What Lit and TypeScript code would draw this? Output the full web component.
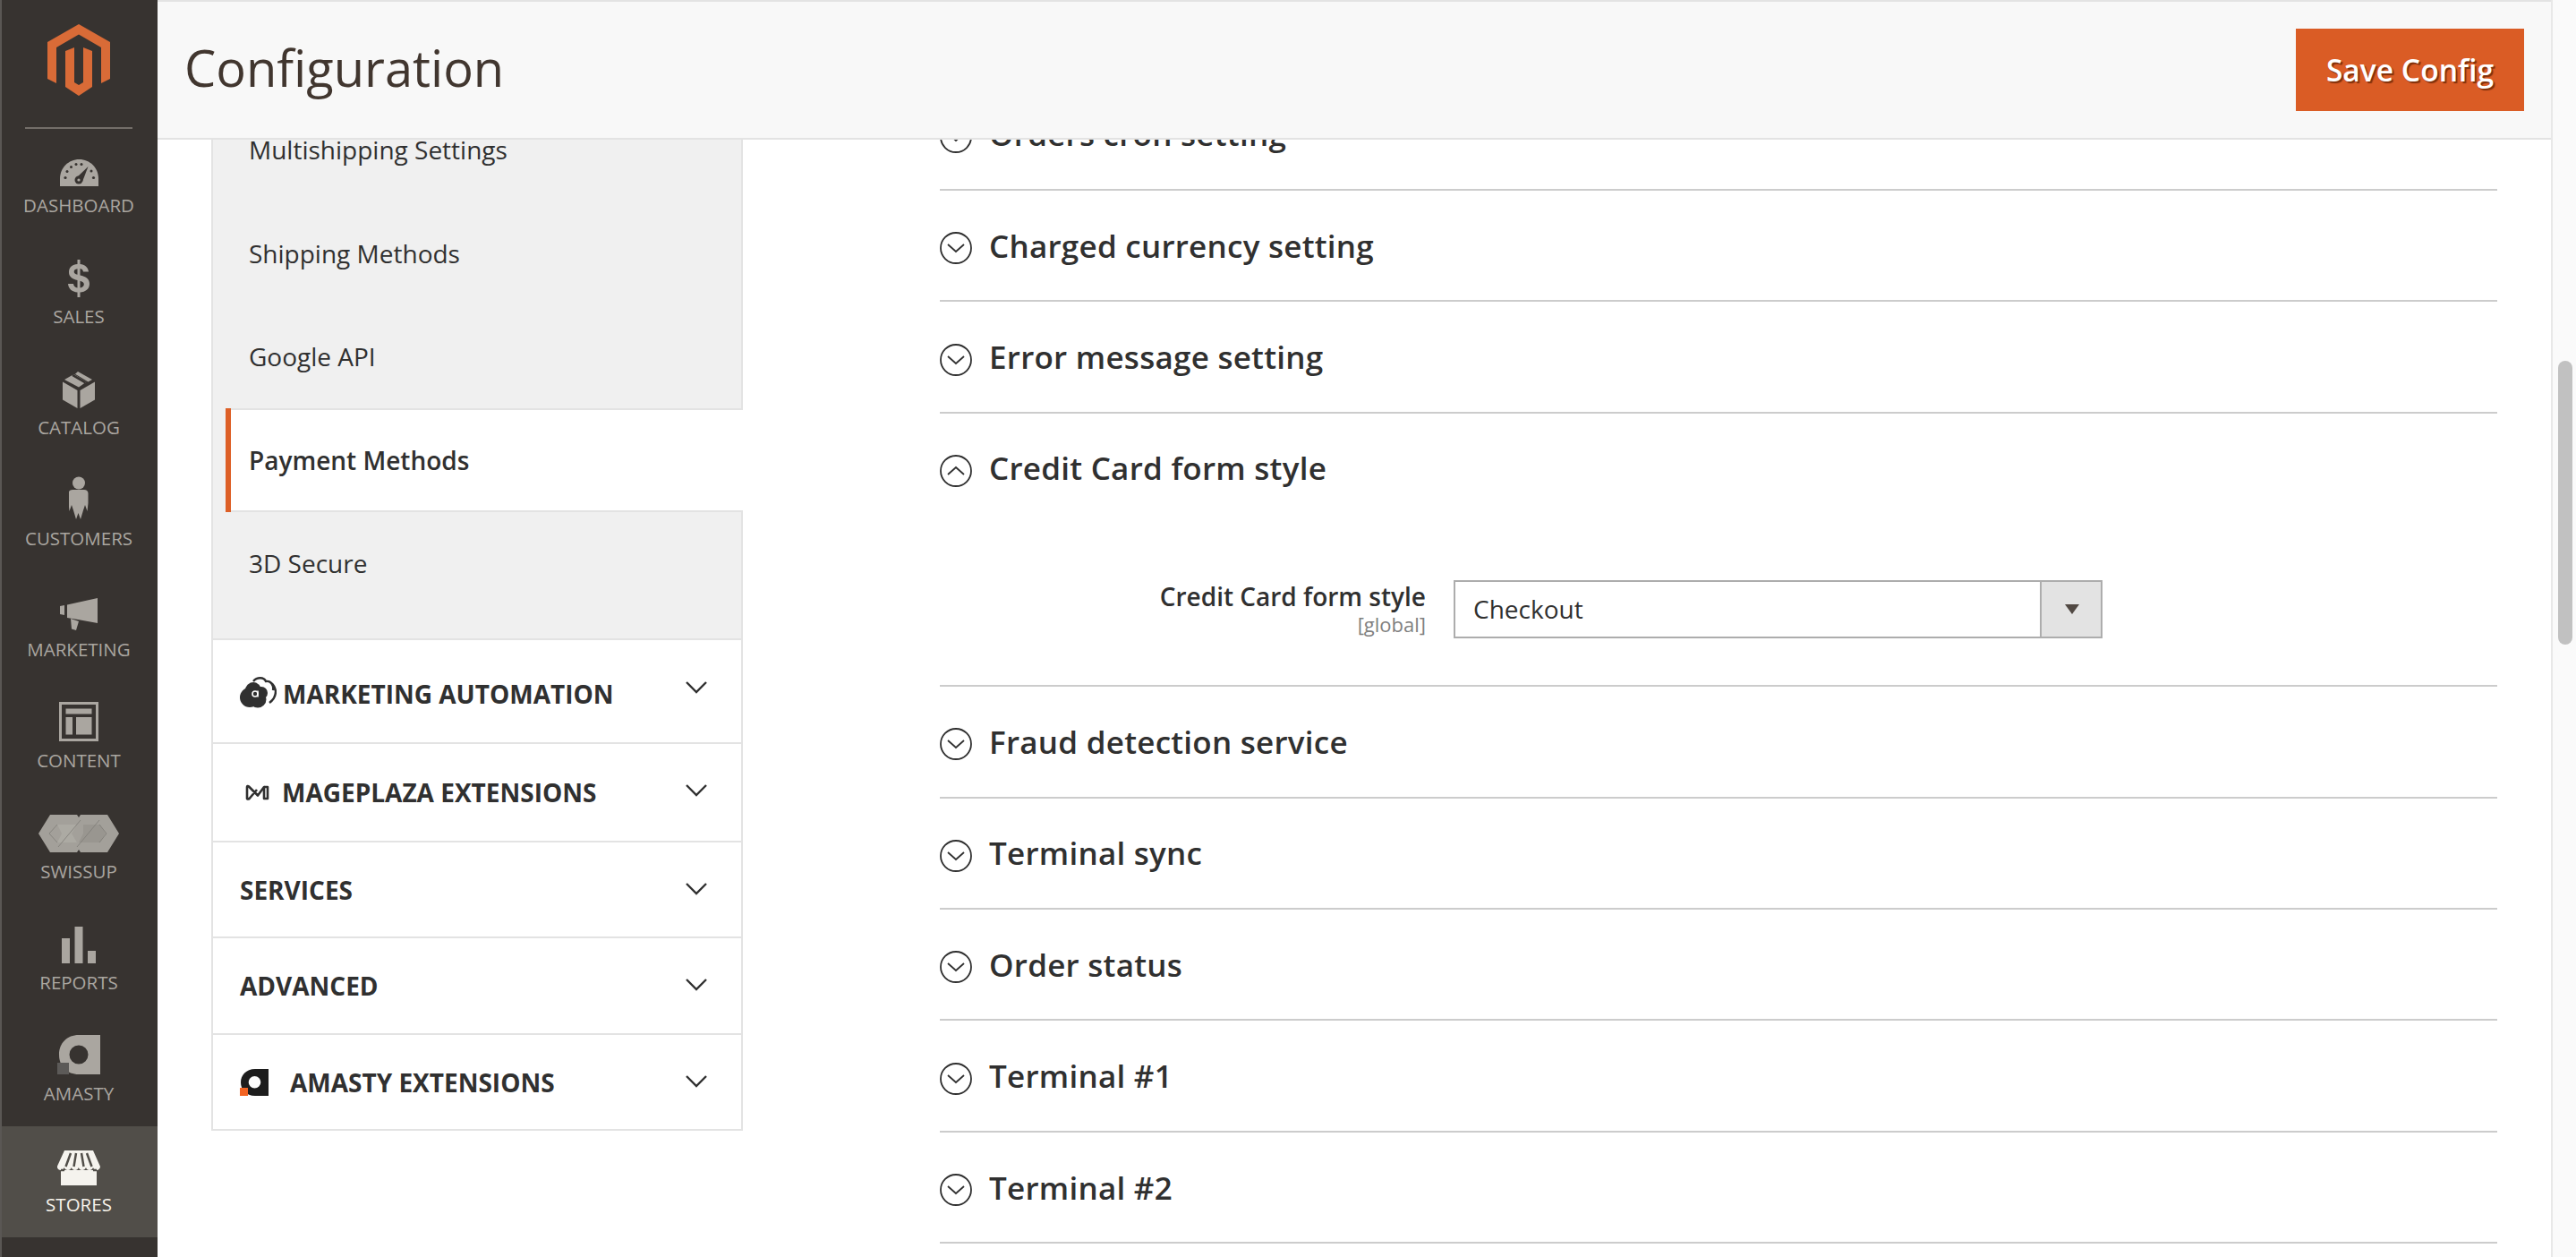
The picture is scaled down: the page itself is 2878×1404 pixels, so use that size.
import { LitElement, html, css, svg } from 'lit';
import { customElement } from 'lit/decorators.js';

const ICONS: Record<string, unknown> = {
  dashboard: svg`<svg width="43" height="30" viewBox="0 0 43 30"><path fill="#aaa6a0" d="M0 30V21.500C0 9.500 9.500 0 21.500 0S43 9.500 43 21.500V30z"/><g fill="#373330"><circle cx="6" cy="20.500" r="1.600"/><circle cx="8" cy="13.500" r="1.500"/><circle cx="12.500" cy="8.500" r="1.500"/><circle cx="18" cy="5.500" r="1.500"/><circle cx="24" cy="5.500" r="1.500"/><circle cx="35" cy="13" r="1.500"/><circle cx="37.500" cy="20.500" r="1.600"/><path d="M31.500 8L25 25l-7-4z"/><circle cx="21" cy="23" r="4.500"/></g><circle cx="21" cy="23" r="1.600" fill="#aaa6a0"/></svg>`,
  sales: svg`<svg width="24" height="42" viewBox="0 0 24 42"><path fill="#aaa6a0" d="M10.500 0h3v5c5 .4 9 3.400 9.500 8.500h-6c-.3-2-1.500-3.200-3.500-3.500v7.500c6 1.500 10.500 3.500 10.500 9.500 0 6-4.500 9-10.500 9.500V42h-3v-5.500C4.500 36 .5 32.500 0 27h6c.3 2.500 2 4 4.500 4.500V23C5 21.500 1 19.500 1 14 1 8.500 5 5.400 10.500 5V0zm0 10.200c-2.500.3-3.800 1.500-3.800 3.300 0 1.800 1.300 2.600 3.800 3.300v-6.600zm3 13.600v7.700c2.800-.4 4.300-1.800 4.300-3.900 0-2-1.500-3-4.300-3.800z"/></svg>`,
  catalog: svg`<svg width="36" height="41" viewBox="0 0 36 41"><g fill="#aaa6a0"><path d="M0 11.500l16.500 9.500v20L0 31.500z"/><path d="M36 11.500L19.500 21v20L36 31.500z"/><path d="M2 9l10.500-6 14 8.500L18 17.500z"/><path d="M17 0l16 9-4.500 2.500L14 2.800z"/></g><path d="M11 3.800l14.500 8.500" stroke="#373330" stroke-width="2.500"/></svg>`,
  customers: svg`<svg width="22" height="48" viewBox="0 0 22 48"><g fill="#aaa6a0"><circle cx="11" cy="7.500" r="7"/><path d="M5 15h12c2.500 0 4.500 1.500 4.500 4v11l-1 9-2.500-7-2 6-3 10-2.500-7-2.500 7-3-10-2-6-2.500 7-1-9V19c0-2.500 2-4 4.500-4z"/></g></svg>`,
  marketing: svg`<svg width="42" height="36" viewBox="0 0 42 36"><g fill="#aaa6a0"><path d="M0 9l5-1v11l-5-1z"/><path d="M8 7.500L42 0v28l-22-4-12-2z"/><path d="M12 23l9 3-3 10-5-1.500z"/></g></svg>`,
  content: svg`<svg width="44" height="44" viewBox="0 0 44 44"><g fill="#aaa6a0"><path fill-rule="evenodd" d="M0 0h44v44H0zM3 3v38h38V3z"/><path d="M7.500 7.500h29v6h-29zM7.500 17h7.500v19.500H7.500zM19 17h17.500v19.500H19z"/></g></svg>`,
  swissup: svg`<svg width="90" height="42" viewBox="0 0 90 42"><path fill="#a3a09a" d="M0 21L13 0h30l2 3 2-3h30l13 21-13 21H47l-2-3-2 3H13z"/><path fill="#b5b2ac" d="M21 11h22l-6 10 6 10H21l5-10z" opacity=".55"/><path fill="#8f8c86" d="M50 11h19l6 10-6 10H45l5-10z" opacity=".5"/><path fill="none" stroke="#7f7c77" stroke-width=".8" d="M12 21l9-10 M12 21l9 10M43 36L68 6M22 36L47 6M76 21l-8-10M76 21l-8 10"/></svg>`,
  reports: svg`<svg width="38" height="41" viewBox="0 0 38 41"><path fill="#aaa6a0" d="M0 13h9v28H0zM14.500 0h9v41h-9zM29 27h9v14h-9z"/></svg>`,
  amasty: svg`<svg width="48" height="44" viewBox="0 0 48 44"><path fill="#aaa6a0" fill-rule="evenodd" d="M24 0h24v44H24C11 44 2 35 2 22S11 0 24 0zm0 11.500a10.500 10.500 0 1 0 0 21 10.500 10.500 0 0 0 0-21z"/><path fill="#5c5a58" d="M0 31h13v13H0z"/></svg>`,
  stores: svg`<svg width="48" height="39" viewBox="0 0 48 39"><path fill="#f5f3ee" d="M8 0h32l8 18c0 2.200-1.800 4-4 4-2 0-3.400-1.200-4-3-.6 1.800-2.200 3-4 3-2 0-3.500-1.200-4-3-.6 1.800-2.200 3-4.200 3-2 0-3.400-1.200-4-3-.5 1.800-2 3-4 3s-3.400-1.200-4-3c-.6 1.800-2 3-4 3s-3.400-1.200-4-3c-.6 1.800-2 3-4 3-2.200 0-4-1.800-4-4z"/><path fill="#f5f3ee" d="M4 22h40v17H4z"/><path stroke="#514e49" stroke-width="2.500" d="M15 3l-5.500 15M21 3l-2.500 15M27 3l2.500 15M33 3l5.500 15M4 22h4M40 22h4"/></svg>`,
};

const NAV = [
  ['dashboard', 'DASHBOARD'],
  ['sales', 'SALES'],
  ['catalog', 'CATALOG'],
  ['customers', 'CUSTOMERS'],
  ['marketing', 'MARKETING'],
  ['content', 'CONTENT'],
  ['swissup', 'SWISSUP'],
  ['reports', 'REPORTS'],
  ['amasty', 'AMASTY'],
  ['stores', 'STORES'],
];

const chevron = svg`<svg class="chev" width="24" height="14" viewBox="0 0 24 14"><path fill="none" stroke="#303030" stroke-width="2.400" d="M1 1l11 11L23 1"/></svg>`;

const circle = (open: boolean) => svg`<svg class="toggle" width="36" height="36" viewBox="0 0 36 36"><circle cx="18" cy="18" r="17" fill="none" stroke="#303030" stroke-width="1.800"/><path fill="none" stroke="#303030" stroke-width="1.800" d="${open ? 'M9 22l9-8 9 8' : 'M9 14l9 8 9-8'}"/></svg>`;

const cloud = svg`<svg width="41" height="35" viewBox="0 0 41 35"><g fill="#303030"><circle cx="15" cy="15" r="9"/><circle cx="11" cy="23" r="11"/><circle cx="20" cy="25" r="9.500"/><circle cx="24" cy="18" r="7"/></g><path fill="none" stroke="#303030" stroke-width="2.400" d="M15 5C19 0 27 0 29 5c6-1 9 5 8 10M33 29c4-3 7-7 7-13-1-6-3-8-6-10"/><circle cx="17" cy="19" r="3" fill="none" stroke="#fff" stroke-width="1.600"/><path d="M20 15.500v7" stroke="#fff" stroke-width="1.600"/></svg>`;

const mageplaza = svg`<svg width="28" height="19" viewBox="0 0 28 19"><path fill="none" stroke="#303030" stroke-width="2.600" stroke-linejoin="round" d="M2 3c0-1 1-1.500 2-.5l10 10L21 3v13h4V3h-4M2 3v13c1 1 2 .5 3-.5L13 6"/></svg>`;

const amastyLogo = svg`<svg width="32" height="30" viewBox="0 0 32 30"><path fill="#1d1d1d" fill-rule="evenodd" d="M17 0h15v30H17C7 30 1 23 1 15S7 0 17 0zm-.500 8a6.800 6.800 0 1 0 0 13.600 6.800 6.800 0 0 0 0-13.600z"/><path fill="#f26322" d="M0 21h9v9H0z"/></svg>`;

const SECTIONS_TOP = ['Orders cron setting', 'Charged currency setting', 'Error message setting'];
const SECTIONS_BOTTOM = ['Fraud detection service', 'Terminal sync', 'Order status', 'Terminal #1', 'Terminal #2'];

@customElement('app-root')
export class AppRoot extends LitElement {
  static styles = css`
    :host {
      display: block;
      width: 2878px;
      height: 1404px;
      overflow: hidden;
      font-family: 'Open Sans', sans-serif;
      color: #303030;
      background: #fff;
    }

    .page {
      display: grid;
      grid-template-columns: 176px 1fr 26px;
      height: 1404px;
    }

    /* left rail */
    .rail {
      background: #373330;
      border-left: 2px solid #5a5754;
      box-sizing: border-box;
      overflow: hidden;
    }

    .logo-box {
      height: 115px;
      margin: 0 28px 0 26px;
      border-bottom: 2px solid #736e69;
      display: flex;
      justify-content: center;
      padding-top: 27px;
    }

    .rail-list {
      margin-top: -2px;
    }

    .rail-item {
      height: 124px;
      display: flex;
      flex-direction: column;
      align-items: center;
      color: #aaa6a0;
      font-size: 20.500px;
      line-height: 28px;
      margin-left: -2px;
    }

    .rail-item.active {
      background: #514e49;
      color: #f7f3eb;
    }

    .rail-icon {
      height: 48px;
      margin: 18px 0 6.500px;
      display: flex;
      align-items: flex-end;
      justify-content: center;
    }

    /* main column */
    .main {
      display: flex;
      flex-direction: column;
      overflow: hidden;
      border-right: 2px solid #e8e8e8;
    }

    .header {
      flex: none;
      height: 156px;
      box-sizing: border-box;
      background: #f8f8f8;
      border-top: 2px solid #e3e3e3;
      border-bottom: 2px solid #e3e3e3;
      display: flex;
      align-items: center;
      justify-content: space-between;
      padding: 0 30px;
      position: relative;
      z-index: 1;
    }

    h1 {
      margin: 0 0 6px;
      font-size: 56px;
      font-weight: 400;
      color: #41362f;
      line-height: 1;
    }

    .save {
      width: 255px;
      height: 92px;
      background: #da5c25;
      color: #fff;
      border: none;
      font: 600 33.600px 'Open Sans', sans-serif;
      text-shadow: 2px 2px 1px rgba(90, 30, 0, 0.7);
      padding: 0 0 1px;
    }

    .body {
      flex: 1;
      min-height: 0;
      overflow: hidden;
      display: flex;
      padding-left: 60px;
    }

    /* config tabs */
    .tabs {
      flex: none;
      width: 594px;
      box-sizing: border-box;
    }

    .group {
      background: #f0f0f0;
      border-left: 2px solid #e3e3e3;
      border-right: 2px solid #e3e3e3;
      border-bottom: 2px solid #e3e3e3;
      padding-bottom: 26px;
    }

    .tab {
      height: 115.500px;
      box-sizing: border-box;
      display: flex;
      align-items: center;
      padding-left: 40px;
      font-size: 28px;
      color: #303030;
    }

    .tab.first {
      height: 77px;
      align-items: flex-start;
      margin-top: -8px;
    }

    .tab.active {
      background: #fff;
      font-weight: 600;
      margin-left: 14px;
      margin-right: -2px;
      padding-left: 20px;
      border-left: 6px solid #dd5f26;
      box-shadow: inset 0 2px #e3e3e3, inset 0 -2px #e3e3e3;
    }

    .sec {
      display: flex;
      align-items: center;
      box-sizing: border-box;
      border-left: 2px solid #e3e3e3;
      border-right: 2px solid #e3e3e3;
      border-bottom: 2px solid #e3e3e3;
      padding-left: 30px;
      padding-right: 38px;
      font-size: 28px;
      font-weight: 700;
      color: #303030;
    }

    .sec .name {
      flex: 1;
      min-width: 0;
    }

    .sec .chev {
      margin-top: -2px;
    }

    .sec-a { height: 116px; padding-top: 6px; }
    .sec-a .chev { margin-top: -14px; }
    .sec-b { height: 110px; }
    .sec-b .chev { margin-top: -4px; }
    .sec-c { height: 107px; }
    .sec-d { height: 108px; }

    .logo-a svg:first-child {
      flex: none;
      margin: -4px 7px 0 0;
    }

    .logo-b svg:first-child {
      flex: none;
      margin: 0 13px 0 6px;
    }

    .logo-c svg:first-child {
      flex: none;
      margin: 0 24px 0 0;
    }

    /* settings column */
    .settings {
      flex: none;
      width: 1740px;
      margin-left: 220px;
      margin-top: -67.400px;
    }

    .row {
      height: 124.400px;
      box-sizing: border-box;
      border-bottom: 2px solid #cccccc;
      display: flex;
      align-items: center;
      gap: 19px;
      font-size: 35px;
      letter-spacing: 0.250px;
      font-weight: 600;
      color: #303030;
    }

    .row.open {
      height: 305.500px;
      display: block;
    }

    .row-title {
      height: 122px;
      display: flex;
      align-items: center;
      gap: 19px;
    }

    .toggle {
      flex: none;
      margin-top: 6px;
    }

    .field {
      display: flex;
      margin-top: 64px;
      letter-spacing: 0;
    }

    .field-label {
      width: 543px;
      text-align: right;
      font-size: 28px;
      line-height: 36px;
      font-weight: 600;
    }

    .scope {
      font-size: 22px;
      line-height: 26px;
      font-weight: 400;
      color: #808080;
    }

    .select {
      margin-left: 31px;
      width: 725px;
      height: 65px;
      box-sizing: border-box;
      border: 2px solid #adadad;
      display: flex;
      align-items: center;
      background: #fff;
      font-size: 28px;
      font-weight: 400;
      padding-left: 20px;
    }

    .select .value {
      flex: 1;
    }

    .select .arrow {
      flex: none;
      width: 68px;
      height: 100%;
      box-sizing: border-box;
      background: #e3e3e3;
      border-left: 2px solid #adadad;
      padding-left: 2px;
      display: flex;
      align-items: center;
      justify-content: center;
    }

    .caret {
      width: 0;
      height: 0;
      border-left: 8px solid transparent;
      border-right: 8px solid transparent;
      border-top: 11px solid #514943;
    }

    /* scrollbar */
    .scrollbar {
      background: #fafafa;
      padding: 403px 4px 0 6px;
      box-sizing: border-box;
    }

    .thumb {
      width: 16px;
      height: 317px;
      border-radius: 8px;
      background: #c1c1c1;
    }
  `;

  private renderRow(title: string) {
    return html`<div class="row">${circle(false)}<span>${title}</span></div>`;
  }

  render() {
    return html`
      <div class="page">
        <nav class="rail">
          <div class="logo-box">
            <svg width="70" height="80" viewBox="0 0 70 80">
              <path fill="#d96b37" d="M35 0l35 20v41l-10 5V26L35 11.500 10 26v40L0 61V20z"/>
              <path fill="#d96b37" d="M20 30l10-4v39l5 3 5-3V26l10 4v40L35 80 20 70z"/>
            </svg>
          </div>
          <div class="rail-list">
            ${NAV.map(
              ([key, label]) => html`
                <div class="rail-item ${key === 'stores' ? 'active' : ''}">
                  <div class="rail-icon">${ICONS[key]}</div>
                  <div>${label}</div>
                </div>
              `
            )}
          </div>
        </nav>

        <div class="main">
          <header class="header">
            <h1>Configuration</h1>
            <button class="save">Save Config</button>
          </header>
          <div class="body">
            <aside class="tabs">
              <div class="group">
                <div class="tab first">Multishipping Settings</div>
                <div class="tab">Shipping Methods</div>
                <div class="tab">Google API</div>
                <div class="tab active">Payment Methods</div>
                <div class="tab">3D Secure</div>
              </div>
              <div class="sec logo-a sec-a">${cloud}<span class="name">MARKETING AUTOMATION</span>${chevron}</div>
              <div class="sec logo-b sec-b">${mageplaza}<span class="name">MAGEPLAZA EXTENSIONS</span>${chevron}</div>
              <div class="sec sec-c"><span class="name">SERVICES</span>${chevron}</div>
              <div class="sec sec-d"><span class="name">ADVANCED</span>${chevron}</div>
              <div class="sec logo-c sec-c">${amastyLogo}<span class="name">AMASTY EXTENSIONS</span>${chevron}</div>
            </aside>
            <section class="settings">
              ${SECTIONS_TOP.map((t) => this.renderRow(t))}
              <div class="row open">
                <div class="row-title">${circle(true)}<span>Credit Card form style</span></div>
                <div class="field">
                  <div class="field-label">Credit Card form style<div class="scope">[global]</div></div>
                  <div class="select">
                    <span class="value">Checkout</span>
                    <span class="arrow"><span class="caret"></span></span>
                  </div>
                </div>
              </div>
              ${SECTIONS_BOTTOM.map((t) => this.renderRow(t))}
            </section>
          </div>
        </div>

        <div class="scrollbar"><div class="thumb"></div></div>
      </div>
    `;
  }
}

declare global {
  interface HTMLElementTagNameMap {
    'app-root': AppRoot;
  }
}
